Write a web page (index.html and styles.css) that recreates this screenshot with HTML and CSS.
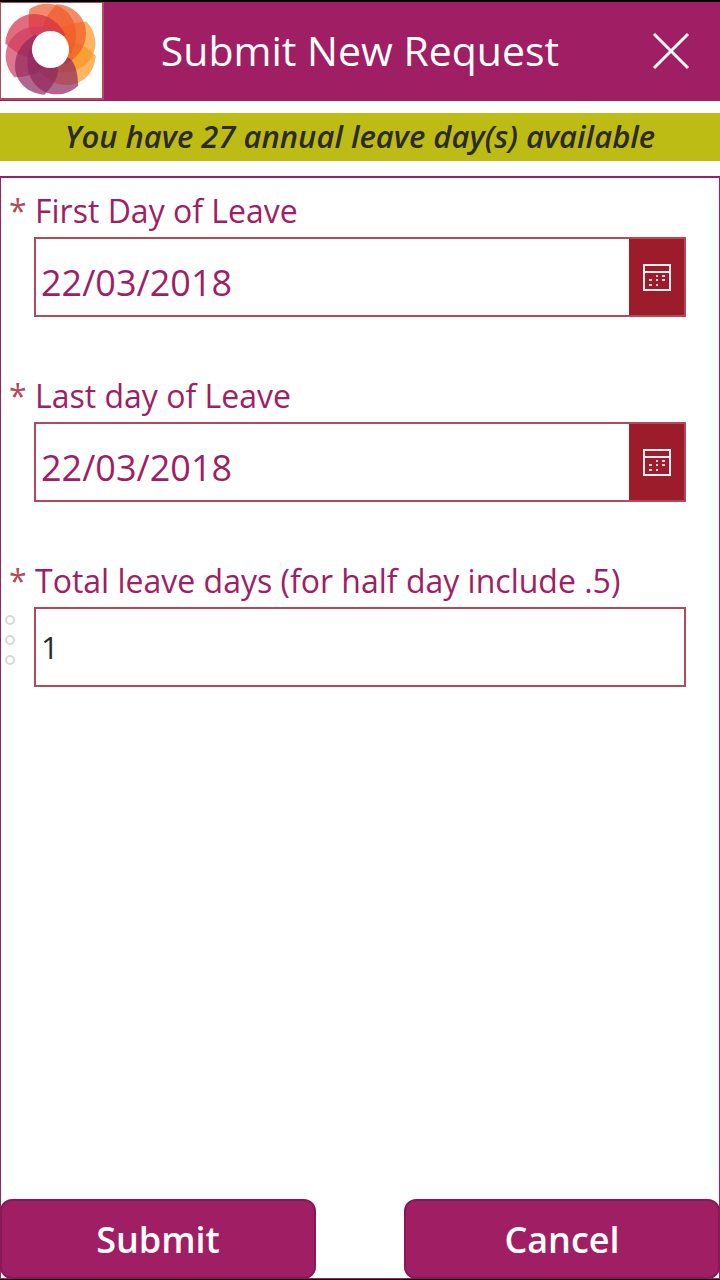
FILE: index.html
```html
<!DOCTYPE html>
<html lang="en">
<head>
<meta charset="utf-8">
<meta name="viewport" content="width=device-width, initial-scale=1">
<title>Submit New Request</title>
<link rel="stylesheet" href="styles.css">
</head>
<body>
<div class="app">
  <header class="header">
    <div class="logo">
      <svg class="logo-art" viewBox="-140 -140 280 280" role="img" aria-label="Company logo">
        <defs>
          <path id="petal" d="M18-136C68-134 107-97 107-49C107-8 82 25 45 45L0 0L-22-58C-24-82 -10-106 18-136Z"/>
        </defs>
        <g class="petals">
          <use href="#petal" fill="#fa951f" transform="rotate(90)"/>
          <use href="#petal" fill="#fa951f" transform="rotate(45)"/>
          <use href="#petal" fill="#f05a28"/>
          <use href="#petal" fill="#f05a28" transform="rotate(325)"/>
          <use href="#petal" fill="#d62e48" transform="rotate(270)"/>
          <use href="#petal" fill="#d23c60" transform="rotate(225)"/>
          <use href="#petal" fill="#90265c" transform="rotate(180)"/>
          <use href="#petal" fill="#90265c" transform="rotate(135)"/>
        </g>
        <circle r="56" fill="#fff"/>
      </svg>
    </div>
    <h1 class="title">Submit New Request</h1>
    <button class="close" type="button" aria-label="Close">
      <svg class="close-icon" viewBox="0 0 38 38"><path d="M2 2L36 36M36 2L2 36"/></svg>
    </button>
  </header>

  <p class="banner">You have 27 annual leave day(s) available</p>

  <form class="panel">
    <div class="fields">
      <div class="field">
        <span class="required">*</span>
        <label class="label" for="first-day">First Day of Leave</label>
        <div class="control">
          <input class="input date" id="first-day" type="text" value="22/03/2018" required>
          <button class="picker" type="button" aria-label="Choose first day">
            <svg class="calendar" viewBox="0 0 28 27"><path class="frame" d="M1 1H27V26H1ZM1 8H27"/><path class="days" d="M13 11h2v2h-2zM19 11h3v2h-3zM6 15h3v2h-3zM13 15h2v2h-2zM19 15h3v2h-3zM6 20h3v2h-3zM13 20h2v2h-2z"/></svg>
          </button>
        </div>
      </div>

      <div class="field">
        <span class="required">*</span>
        <label class="label" for="last-day">Last day of Leave</label>
        <div class="control">
          <input class="input date" id="last-day" type="text" value="22/03/2018" required>
          <button class="picker" type="button" aria-label="Choose last day">
            <svg class="calendar" viewBox="0 0 28 27"><path class="frame" d="M1 1H27V26H1ZM1 8H27"/><path class="days" d="M13 11h2v2h-2zM19 11h3v2h-3zM6 15h3v2h-3zM13 15h2v2h-2zM19 15h3v2h-3zM6 20h3v2h-3zM13 20h2v2h-2z"/></svg>
          </button>
        </div>
      </div>

      <div class="field">
        <span class="required">*</span>
        <label class="label" for="total">Total leave days (for half day include .5)</label>
        <svg class="dots" viewBox="0 0 10 50" aria-hidden="true"><circle cx="5" cy="5" r="4"/><circle cx="5" cy="25" r="4"/><circle cx="5" cy="45" r="4"/></svg>
        <div class="control">
          <input class="input" id="total" type="text" value="1" required>
        </div>
      </div>
    </div>

    <div class="actions">
      <button class="action" type="submit">Submit</button>
      <button class="action" type="button">Cancel</button>
    </div>
  </form>
</div>
</body>
</html>
```
FILE: styles.css
```css
* {
  box-sizing: border-box;
}

body {
  margin: 0;
  background: #fff;
  font-family: "Open Sans", "Noto Sans", sans-serif;
  color: #2e2a2b;
}

button,
input {
  font: inherit;
  margin: 0;
}

.app {
  display: flex;
  flex-direction: column;
  min-height: 100vh;
  border-top: 2px solid #000;
  border-bottom: 1px solid #000;
}

.header {
  display: grid;
  grid-template-columns: 104px 1fr 104px;
  height: 99px;
  padding-bottom: 1px;
  background: #9f1e64;
}

.logo {
  min-height: 0;
  padding: 0 4px 2px 2px;
  background: #fff;
  border: 2px solid #b34a59;
  border-left-width: 1px;
  border-top-width: 1px;
}

.logo-art {
  display: block;
  width: 100%;
  height: 100%;
}

.petals use {
  opacity: 0.7;
}

.title {
  margin: 0;
  padding-bottom: 2px;
  align-self: center;
  text-align: center;
  color: #fff;
  font-size: 41px;
  line-height: 56px;
  font-weight: 400;
  white-space: nowrap;
}

.close {
  display: flex;
  align-items: center;
  justify-content: center;
  padding: 0 0 0 5px;
  border: 0;
  background: none;
}

.close-icon {
  width: 38px;
  height: 38px;
  fill: none;
  stroke: #fff;
  stroke-width: 3;
}

.banner {
  margin: 12px 0 15px;
  padding-bottom: 2px;
  background: #bcbc14;
  text-align: center;
  font-size: 31px;
  line-height: 46px;
  font-weight: 600;
  font-style: italic;
}

.panel {
  flex: 1;
  display: flex;
  flex-direction: column;
  justify-content: space-between;
  border: 1px solid #9f1e64;
  border-top-width: 2px;
}

.fields {
  display: grid;
  gap: 57px;
  padding: 11px 33px 55px 0;
}

.field {
  display: grid;
  grid-template-columns: 33px 1fr;
  row-gap: 4px;
}

.required,
.label {
  font-size: 32px;
  line-height: 44px;
}

.required {
  padding-left: 8px;
  color: #b34a59;
}

.label {
  padding-left: 1px;
  color: #9f1e64;
}

.control {
  grid-column: 2;
  display: flex;
  height: 80px;
  border: 2px solid #b34a59;
}

.input {
  flex: 1;
  min-width: 0;
  padding: 0 5px;
  border: 0;
  background: #fff;
  color: #2e2a2b;
  font-size: 31px;
}

.date {
  padding-top: 10px;
  color: #9f1e64;
  font-size: 36px;
}

.picker {
  display: flex;
  align-items: center;
  justify-content: center;
  width: 55px;
  padding: 0;
  border: 0;
  background: #9c1c2c;
}

.calendar {
  width: 28px;
  height: 27px;
}

.frame {
  fill: none;
  stroke: #f8eef0;
  stroke-width: 2;
}

.days {
  fill: #eed5d9;
}

.dots {
  width: 10px;
  height: 50px;
  margin: 8px 0 0 4px;
  fill: none;
  stroke: #d8d8d8;
  stroke-width: 2;
}

.actions {
  display: flex;
  gap: 88px;
  margin: 0 -1px -1px;
}

.action {
  flex: 1;
  height: 80px;
  padding: 0;
  border: 2px solid #871a56;
  border-radius: 12px;
  background: #9f1e64;
  color: #fff;
  font-size: 36px;
  font-weight: 600;
}
```
